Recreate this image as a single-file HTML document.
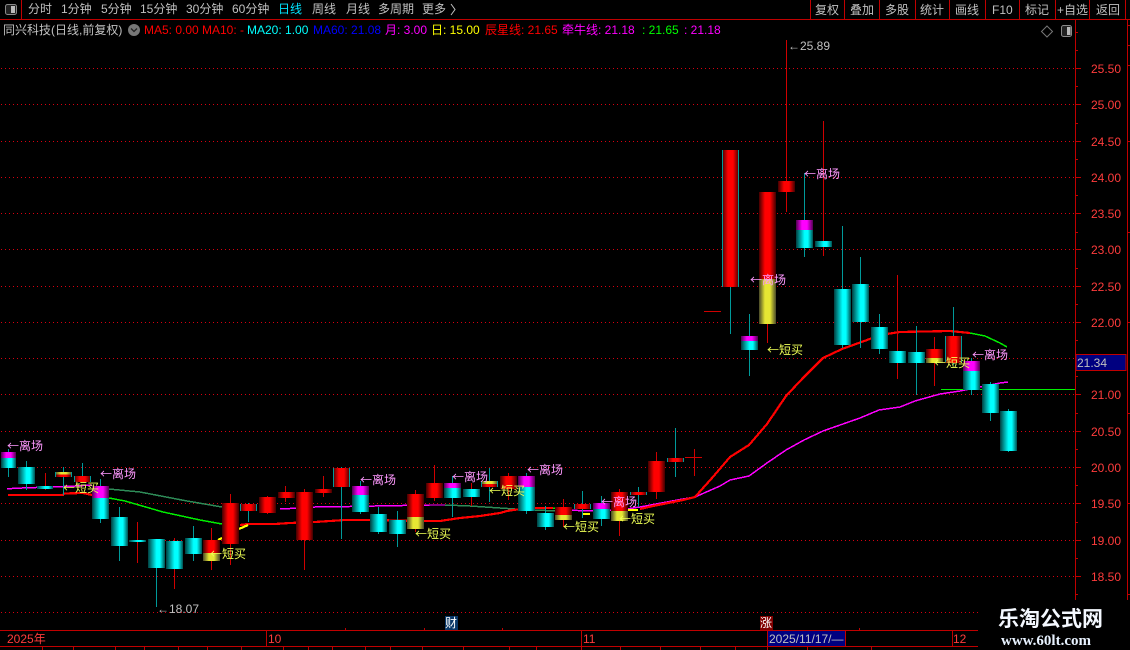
<!DOCTYPE html>
<html><head><meta charset="utf-8">
<style>
html,body{margin:0;padding:0;background:#000;width:1130px;height:650px;overflow:hidden}
svg{display:block;position:absolute;left:0;top:0}
text{font-family:"Liberation Sans","WenQuanYi Zen Hei","Noto Sans CJK SC",sans-serif;font-size:12px}
.n text{fill:#c0c0c0}
.lz text,.dm text{font-family:"WenQuanYi Zen Hei","Noto Sans CJK SC",sans-serif;font-size:12px}
.lz text{fill:#ff99ff}
.dm text{fill:#eeff55}
.ax text{fill:#ff3c3c;font-size:12px}
</style></head>
<body>
<svg width="1130" height="650" viewBox="0 0 1130 650" xmlns="http://www.w3.org/2000/svg">
<defs>
<linearGradient id="c"><stop offset="0" stop-color="#003f3f"/><stop offset=".5" stop-color="#00ffff"/><stop offset=".7" stop-color="#00ffff"/><stop offset="1" stop-color="#004f4f"/></linearGradient>
<linearGradient id="r"><stop offset="0" stop-color="#400000"/><stop offset=".35" stop-color="#ff0000"/><stop offset=".65" stop-color="#ff0000"/><stop offset="1" stop-color="#400000"/></linearGradient>
<linearGradient id="m"><stop offset="0" stop-color="#500050"/><stop offset=".35" stop-color="#ff00ff"/><stop offset=".65" stop-color="#ff00ff"/><stop offset="1" stop-color="#500050"/></linearGradient>
<linearGradient id="y"><stop offset="0" stop-color="#484828"/><stop offset=".35" stop-color="#e6e633"/><stop offset=".65" stop-color="#e6e633"/><stop offset="1" stop-color="#484828"/></linearGradient>
</defs>
<rect width="1130" height="650" fill="#000"/>

<!-- grid -->
<path shape-rendering="crispEdges" d="M1 68.5H1075M1 104.5H1075M1 141.5H1075M1 177.5H1075M1 213.5H1075M1 249.5H1075M1 286.5H1075M1 322.5H1075M1 358.5H1075M1 394.5H1075M1 431.5H1075M1 467.5H1075M1 503.5H1075M1 540.5H1075M1 576.5H1075M1 612.5H978" stroke="#d80010" stroke-dasharray="1 3" fill="none"/>

<!-- top bars -->
<g fill="none" stroke="#c00000" shape-rendering="crispEdges">
<path d="M0 19.5H1130M21.5 0V19.5M810.5 0V19.5M844.5 0V19.5M879.5 0V19.5M915.5 0V19.5M949.5 0V19.5M985.5 0V19.5M1019.5 0V19.5M1055.5 0V19.5M1089.5 0V19.5M1125.5 0V19.5"/>
<path d="M1075.5 20V600M1127.5 20V600"/>
<path d="M0 630.5H978M0 646.5H978M266.5 630V646M581.5 630V646M767.5 630V646M845.5 630V646M952.5 630V646M345.5 630V628M424.5 630V628M502.5 630V628M859.5 630V628"/>
<path d="M42.5 646V650M73.5 646V650M115.5 646V650M144.5 646V650M178.5 646V650M207.5 646V650M241.5 646V650M283.5 646V650M308.5 646V650M332.5 646V650M365.5 646V650M390.5 646V650M422.5 646V650M463.5 646V650M509.5 646V650M536.5 646V650M581.5 646V650M620.5 646V650M660.5 646V650M700.5 646V650M735.5 646V650M767.5 646V650M807.5 646V650M871.5 646V650"/>
<!-- axis ticks -->
<path d="M1075 68.5H1081M1075 104.5H1081M1075 141.5H1081M1075 177.5H1081M1075 213.5H1081M1075 249.5H1081M1075 286.5H1081M1075 322.5H1081M1075 358.5H1081M1075 394.5H1081M1075 431.5H1081M1075 467.5H1081M1075 503.5H1081M1075 540.5H1081M1075 576.5H1081"/>
<path d="M1075 32.5H1078M1075 50.5H1078M1075 86.5H1078M1075 123.5H1078M1075 159.5H1078M1075 195.5H1078M1075 232.5H1078M1075 268.5H1078M1075 304.5H1078M1075 340.5H1078M1075 376.5H1078M1075 413.5H1078M1075 449.5H1078M1075 485.5H1078M1075 522.5H1078M1075 558.5H1078M1075 594.5H1078"/>
<path d="M1127 25.5H1130M1127 45.5H1130M1127 65.5H1130M1127 141.5H1130M1127 232.5H1130M1127 322.5H1130M1127 413.5H1130M1127 503.5H1130M1127 594.5H1130"/>
</g>

<!-- window icons -->
<rect x="5.5" y="4.5" width="11" height="10" rx="2" fill="#222" stroke="#8a8a8a"/><rect x="11" y="6" width="4" height="7" fill="#bbb"/>
<rect x="1061.5" y="25.5" width="10" height="11" rx="2" fill="#222" stroke="#8a8a8a"/><rect x="1067" y="27" width="3.5" height="8" fill="#bbb"/>
<path d="M1047 26L1052.5 31.5L1047 37L1041.5 31.5Z" fill="none" stroke="#777"/>
<circle cx="134" cy="30" r="6" fill="#777"/><path d="M131 28.5L134 31.5L137 28.5" fill="none" stroke="#222" stroke-width="1.3"/>

<!-- nav -->
<g class="n">
<text x="28" y="13">分时</text><text x="61" y="13">1分钟</text><text x="101" y="13">5分钟</text><text x="140" y="13">15分钟</text><text x="186" y="13">30分钟</text><text x="232" y="13">60分钟</text>
<text x="278" y="13" style="fill:#00e5ff">日线</text><text x="312" y="13">周线</text><text x="346" y="13">月线</text><text x="378" y="13">多周期</text><text x="422" y="13">更多</text>
<text x="815" y="14">复权</text><text x="850" y="14">叠加</text><text x="885" y="14">多股</text><text x="920" y="14">统计</text><text x="955" y="14">画线</text><text x="992" y="14">F10</text><text x="1025" y="14">标记</text><text x="1057" y="14">+自选</text><text x="1096" y="14">返回</text>
<text x="3" y="34">同兴科技(日线,前复权)</text>
</g>
<path d="M451 4L455 9.5L451 15" fill="none" stroke="#c0c0c0"/>

<text x="144" y="34" fill="#ff0000">MA5: 0.00</text>
<text x="202" y="34" fill="#ff0000">MA10: -</text>
<text x="247" y="34" fill="#00ffff">MA20: 1.00</text>
<text x="313" y="34" fill="#0000ff">MA60: 21.08</text>
<text x="385" y="34" fill="#ff00ff">月: 3.00</text>
<text x="431" y="34" fill="#ffff00">日: 15.00</text>
<text x="485" y="34" fill="#ff0000">辰星线: 21.65</text>
<text x="562" y="34" fill="#ff00ff">牵牛线: 21.18</text>
<text x="642" y="34" fill="#00ff00">: 21.65</text>
<text x="684" y="34" fill="#ff00ff">: 21.18</text>

<!-- indicator lines -->
<g fill="none" stroke-linejoin="round" shape-rendering="crispEdges">
<polyline stroke="#ff00ff" stroke-width="1.5" points="7,489 12,488.5 22,488 36,487.5 53,487 75,486 92,485"/>
<polyline stroke="#ff00ff" stroke-width="1.5" points="280,509 300,508 315,507 350,506.5 375,506 430,505 445,505"/>
<polyline stroke="#2e8b57" stroke-width="1.5" points="109,489 140,492 187,501 222,507"/>
<polyline stroke="#2e8b57" stroke-width="1.5" points="445,505 470,506 500,508 530,510 560,511"/>
<polyline stroke="#00ee00" stroke-width="1.5" points="109,498 125,501 163,512 200,520 222,524"/>
<polyline stroke="#00ee00" stroke-width="1.5" points="533,508 555,508"/>
<polyline stroke="#ff00ff" stroke-width="1.5" points="555,510 600,511 620,510 640,507 683,499 695,497 720,486 730,480 749,476 767,463 786,450 804,440 823,431 860,418 879,410 900,407 915,401 940,394 960,391 1000,383 1008,382"/>
<polyline stroke="#ff0000" stroke-width="2.2" points="8,495 63,495 64,493.5 83,493 92,495"/>
<polyline stroke="#ff0000" stroke-width="2.2" points="240,525 248,524 275,524 290,523 315,522 345,520 370,520 424,521 440,521 460,518 480,516 500,513 507,511 527,508 553,508"/>
<polyline stroke="#ff0000" stroke-width="2.2" points="640,509 653,506 683,500 695,497 712,478 730,457 749,445 767,424 786,396 803,378 823,358 842,349 867,340 880,335 900,332 950,331 970,333"/>
<polyline stroke="#00ee00" stroke-width="1.5" points="970,333 985,336 1000,343 1007,347"/>
<polyline stroke="#ffff00" stroke-width="2.2" points="218,540 222,538"/>
<polyline stroke="#ffff00" stroke-width="2.2" points="239,529 248,525"/>
<polyline stroke="#ffff00" stroke-width="2.2" points="583,514 590,514"/>
<polyline stroke="#ffff00" stroke-width="2.2" points="628,510 638,510"/>
</g>

<!-- wicks -->
<path shape-rendering="crispEdges" fill="none" stroke="#009a9a" d="M8.5 449V477M26.5 461V490M63.5 467V495M82.5 463V482M100.5 479V523M119.5 507V561M156.5 568V607M193.5 526V561M248.5 503V522M341.5 467V539M360.5 481V514M378.5 507V534M397.5 511V547M452.5 476V517M489.5 468V502M526.5 473V514M545.5 506V530M582.5 491V518M601.5 496V526M638.5 487V507M675.5 428V477M730.5 287V334M749.5 314V376M804.5 173V257M842.5 226V348M860.5 257V348M879.5 314V354M916.5 326V395M953.5 307V365M971.5 358V395M990.5 382V421M1008.5 409V452"/>
<path shape-rendering="crispEdges" fill="none" stroke="#d00000" d="M45.5 473V490M137.5 522V563M174.5 538V589M211.5 528V570M230.5 494V565M267.5 496V514M285.5 486V502M304.5 489V570M323.5 476V497M415.5 490V532M434.5 465V501M471.5 483V506M508.5 473V500M563.5 499V527M619.5 489V536M656.5 452V499M694.5 449V476M767.5 324V343M786.5 40V212M823.5 121V256M897.5 275V379M934.5 337V386"/>
<path shape-rendering="crispEdges" fill="none" stroke="#d00000" d="M685 457.5H702M704 311.5H721"/>
<path shape-rendering="crispEdges" fill="none" stroke="#00ee00" d="M941 389.5H1075"/>

<!-- cyan bodies -->
<g fill="url(#c)" shape-rendering="crispEdges">
<rect x="1" y="452" width="15" height="16"/><rect x="18" y="467" width="17" height="17"/><rect x="37" y="486" width="16" height="3"/><rect x="92" y="486" width="17" height="33"/><rect x="111" y="517" width="17" height="29"/><rect x="129" y="540" width="17" height="2"/><rect x="148" y="539" width="17" height="29"/><rect x="166" y="541" width="17" height="28"/><rect x="185" y="538" width="17" height="16"/>
<rect x="352" y="486" width="17" height="26"/><rect x="370" y="514" width="17" height="18"/><rect x="389" y="520" width="17" height="14"/><rect x="444" y="483" width="17" height="15"/><rect x="463" y="489" width="17" height="8"/><rect x="518" y="476" width="17" height="35"/><rect x="537" y="513" width="17" height="14"/><rect x="593" y="503" width="17" height="16"/>
<rect x="741" y="336" width="17" height="14"/><rect x="796" y="220" width="17" height="28"/><rect x="815" y="241" width="17" height="6"/><rect x="834" y="289" width="17" height="56"/><rect x="852" y="284" width="17" height="38"/><rect x="871" y="327" width="17" height="22"/><rect x="889" y="351" width="17" height="12"/><rect x="908" y="352" width="17" height="11"/><rect x="963" y="361" width="17" height="29"/><rect x="982" y="384" width="17" height="29"/><rect x="1000" y="411" width="17" height="40"/>
</g>
<!-- red bodies -->
<g fill="url(#r)" shape-rendering="crispEdges">
<rect x="55" y="472" width="17" height="5"/><rect x="74" y="476" width="17" height="6"/><rect x="203" y="540" width="17" height="21"/><rect x="222" y="503" width="17" height="41"/><rect x="240" y="504" width="17" height="7"/><rect x="259" y="497" width="17" height="16"/><rect x="278" y="492" width="17" height="6"/><rect x="296" y="492" width="17" height="48"/><rect x="315" y="489" width="17" height="4"/><rect x="333" y="468" width="17" height="19"/><rect x="407" y="494" width="17" height="35"/><rect x="426" y="483" width="17" height="15"/><rect x="481" y="481" width="17" height="6"/><rect x="500" y="476" width="17" height="13"/><rect x="555" y="507" width="17" height="13"/><rect x="574" y="504" width="17" height="5"/><rect x="611" y="492" width="17" height="29"/><rect x="630" y="492" width="17" height="3"/><rect x="648" y="461" width="17" height="31"/><rect x="667" y="458" width="17" height="4"/><rect x="722" y="150" width="17" height="137"/><rect x="759" y="192" width="17" height="132"/><rect x="778" y="181" width="17" height="11"/><rect x="926" y="349" width="17" height="14"/><rect x="945" y="336" width="17" height="27"/>
</g>
<!-- magenta tops -->
<g fill="url(#m)" shape-rendering="crispEdges">
<rect x="1" y="452" width="15" height="6"/><rect x="92" y="486" width="17" height="12"/><rect x="352" y="486" width="17" height="9"/><rect x="444" y="483" width="17" height="5"/><rect x="518" y="476" width="17" height="11"/><rect x="593" y="503" width="17" height="6"/><rect x="741" y="336" width="17" height="5"/><rect x="796" y="220" width="17" height="10"/><rect x="963" y="361" width="17" height="10"/>
</g>
<!-- yellow parts -->
<g fill="url(#y)" shape-rendering="crispEdges">
<rect x="55" y="472" width="17" height="2.5"/><rect x="203" y="553" width="17" height="8"/><rect x="407" y="517" width="17" height="12"/><rect x="481" y="481" width="17" height="3"/><rect x="555" y="515" width="17" height="5"/><rect x="611" y="511" width="17" height="10"/><rect x="759" y="279" width="17" height="45"/><rect x="926" y="358" width="17" height="5"/>
</g>
<!-- teal edges on some red bodies -->
<path shape-rendering="crispEdges" fill="none" stroke="#009a9a" d="M722.5 150V287M738.5 150V287M333.5 468V487M349.5 468V487M240.5 504V511M256.5 504V511M55.5 472V477M71.5 472V477M74.5 476V482M90.5 476V482M481.5 481V487M497.5 481V487M574.5 504V509M590.5 504V509M630.5 492V495M646.5 492V495M667.5 458V462M683.5 458V462M945.5 336V362M961.5 336V362"/>

<!-- signal labels -->
<g class="lz">
<text x="7" y="450">←离场</text><text x="100" y="478">←离场</text><text x="360" y="484">←离场</text><text x="452" y="481">←离场</text><text x="527" y="474">←离场</text><text x="601" y="506">←离场</text><text x="750" y="284">←离场</text><text x="804" y="178">←离场</text><text x="972" y="359">←离场</text>
</g>
<g class="dm">
<text x="63" y="492">←短买</text><text x="210" y="558">←短买</text><text x="415" y="538">←短买</text><text x="489" y="495">←短买</text><text x="563" y="531">←短买</text><text x="619" y="523">←短买</text><text x="767" y="354">←短买</text><text x="934" y="367">←短买</text>
</g>
<text x="157" y="613" fill="#c0c0c0">←18.07</text>
<text x="788" y="50" fill="#c0c0c0">←25.89</text>

<!-- price axis -->
<g class="ax">
<text x="1091" y="73">25.50</text><text x="1091" y="109">25.00</text><text x="1091" y="146">24.50</text><text x="1091" y="182">24.00</text><text x="1091" y="218">23.50</text><text x="1091" y="254">23.00</text><text x="1091" y="291">22.50</text><text x="1091" y="327">22.00</text><text x="1091" y="399">21.00</text><text x="1091" y="436">20.50</text><text x="1091" y="472">20.00</text><text x="1091" y="508">19.50</text><text x="1091" y="545">19.00</text><text x="1091" y="581">18.50</text>
</g>
<rect x="1076" y="354.5" width="50" height="16" fill="#000080" stroke="#c00000"/>
<text x="1077" y="367" fill="#c0c0c0">21.34</text>

<!-- time axis -->
<g class="ax">
<text x="7" y="643">2025年</text><text x="268" y="643">10</text><text x="583" y="643">11</text><text x="953" y="643">12</text>
</g>
<rect x="445" y="616" width="13" height="14" fill="#0a3868"/><text x="445" y="627" fill="#fff">财</text>
<rect x="760" y="616" width="13" height="14" fill="#800000"/><text x="760" y="627" fill="#fff">涨</text>
<rect x="768" y="631" width="77" height="15" fill="#000080"/><text x="769" y="643" fill="#c0c0c0">2025/11/17/—</text>

<!-- watermark -->
<rect x="978" y="600" width="152" height="50" fill="#000"/>
<text x="998" y="626" fill="#f4f8ff" style="font-family:'Noto Sans CJK SC',sans-serif;font-size:21px;font-weight:700">乐淘公式网</text>
<text x="1001" y="645" fill="#e8f2ff" style="font-family:'Liberation Serif',serif;font-size:15px;font-weight:700">www.60lt.com</text>
</svg>
</body></html>
